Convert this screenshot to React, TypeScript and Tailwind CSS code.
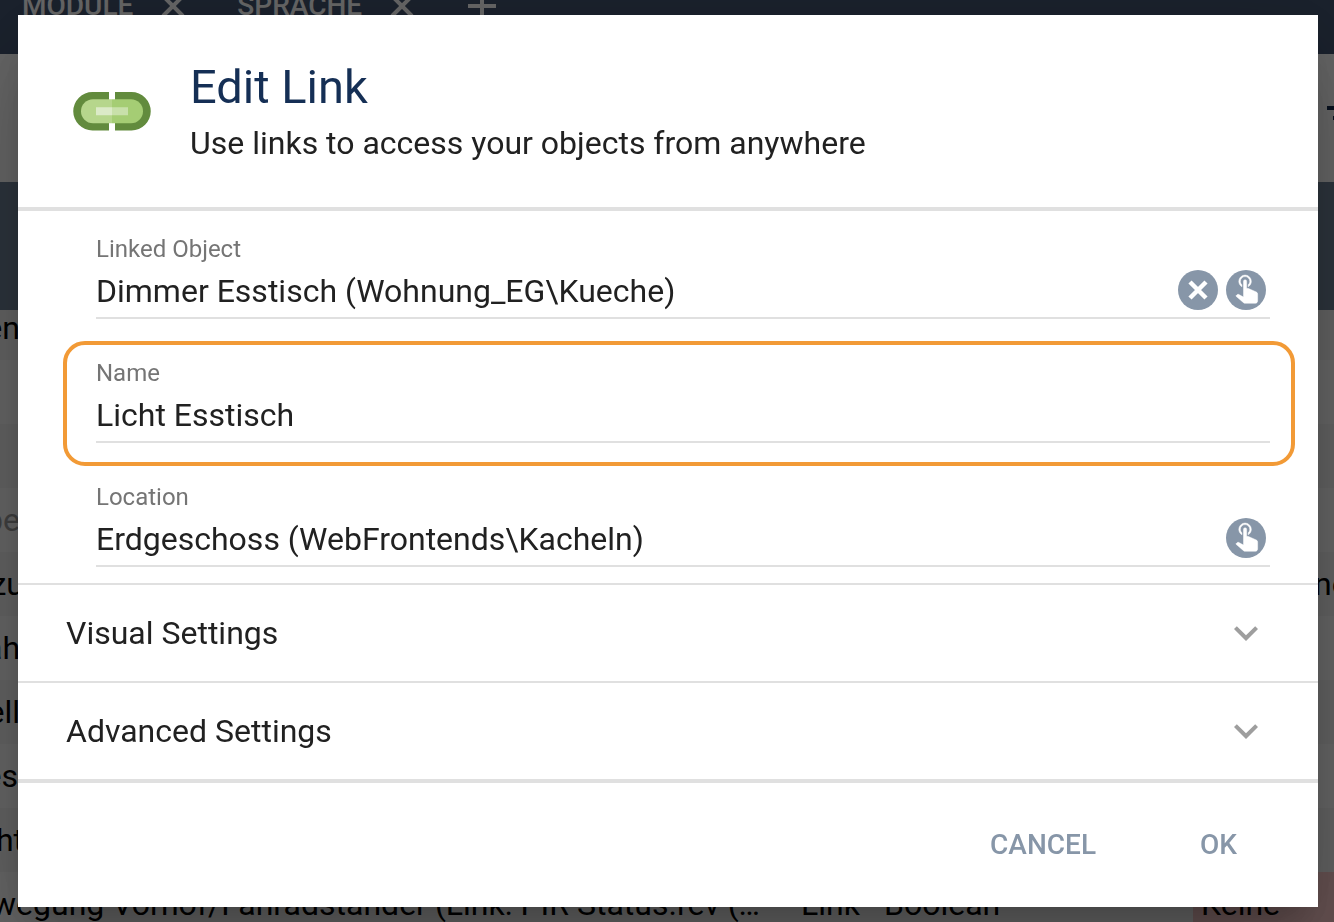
import { useState } from "react";
import { MdExpandMore, MdFilterList, MdAdd } from "react-icons/md";

const rows = [
  { name: "en", type: "", className: "w-9" },
  { name: "", type: "", className: "w-9" },
  { name: "", type: "", className: "w-9" },
  { name: "pe", type: "", className: "w-9 text-[#9e9e9e]" },
  { name: "zu", type: "ne", className: "w-10" },
  { name: "ah", type: "", className: "w-9" },
  { name: "ell", type: "", className: "w-9" },
  { name: "es", type: "", className: "w-[34px]" },
  { name: "ht", type: "", className: "w-10" },
];

function TabCloseIcon() {
  return (
    <svg viewBox="0 0 40 40" className="size-10" aria-hidden="true">
      <path d="M10 10l20 20M30 10L10 30" stroke="currentColor" strokeWidth="4" />
    </svg>
  );
}

function ObjectPage() {
  return (
    <div className="flex h-screen flex-col overflow-hidden bg-white text-[32px] leading-10 text-black">
      <nav className="flex h-[54px] shrink-0 items-start gap-11 overflow-hidden bg-[#425470] pl-[22px] text-[28px] leading-3 font-medium text-white">
        <span className="flex h-3 items-center gap-5">
          MODULE <TabCloseIcon />
        </span>
        <span className="flex h-3 items-center gap-5">
          SPRACHE <TabCloseIcon />
        </span>
        <span className="-ml-2 flex h-3 items-center">
          <MdAdd className="size-12" />
        </span>
      </nav>
      <div className="flex h-32 shrink-0 items-center justify-end overflow-hidden text-[#12294d]">
        <MdFilterList className="-mr-[35px] size-12 shrink-0" />
      </div>
      <div className="h-32 shrink-0 bg-[#6f8297]" />
      <div className="min-h-0 flex-1 overflow-hidden">
        {rows.map((row, i) => (
          <div
            key={i}
            className={`flex items-center justify-between ${i === 0 ? "h-[50px] pb-3.5" : "h-16"} ${i % 2 === 0 ? "bg-[#f5f5f5]" : "bg-white"}`}
          >
            <span className={`-ml-4 flex justify-end whitespace-nowrap ${row.className}`}>{row.name}</span>
            <span className="w-5">{row.type}</span>
          </div>
        ))}
        <div className="flex h-16 items-center whitespace-nowrap">
          <span className="-ml-2 w-[809px]">wegung Vorhof/Fahradständer (Link: PIR Status.rev (…</span>
          <span className="w-[83px]">Link</span>
          <span className="w-[309px]">Boolean</span>
          <span className="flex h-16 flex-1 items-center bg-[#ffcccc] pl-2">Keine</span>
        </div>
      </div>
    </div>
  );
}

function LinkIcon() {
  return (
    <svg viewBox="0 0 80 40" className="h-10 w-20 shrink-0" aria-hidden="true">
      <path d="M37 1H20.500a19.250 19.250 0 0 0 0 38.500H37z M43 1h16.500a19.250 19.250 0 0 1 0 38.500H43z" fill="#628b3d" />
      <path d="M40 8.250H21a12 12 0 0 0 0 24h19z" fill="#b6d68c" />
      <path d="M40 8.250h19a12 12 0 0 1 0 24H40z" fill="#a5cd74" />
      <path d="M24 16.250h16v8H24z" fill="#dbeac7" />
      <path d="M40 16.250h16v8H40z" fill="#c8e0aa" />
    </svg>
  );
}

function RoundButton({ label, kind }: { label: string; kind: "clear" | "pick" }) {
  return (
    <button type="button" aria-label={label} className="size-10 shrink-0 rounded-full bg-[#8796a8] text-white">
      <svg viewBox="0 0 40 40" className="size-10" aria-hidden="true">
        {kind === "clear" ? (
          <path d="M12 12l16 16M28 12L12 28" stroke="currentColor" strokeWidth="4.500" />
        ) : (
          <path
            transform="translate(1.8 -2.8) scale(1.57)"
            fill="currentColor"
            d="M10,9A1,1 0 0,1 11,8A1,1 0 0,1 12,9V13.47L13.21,13.6L18.15,15.79C18.68,16.03 19,16.56 19,17.14V21.5C18.97,22.32 18.32,22.97 17.5,23H11C10.62,23 10.26,22.85 10,22.57L5.1,18.37L5.84,17.6C6.03,17.39 6.3,17.28 6.58,17.28H6.8L10,19V9M11,5A4,4 0 0,1 15,9C15,10.5 14.2,11.77 13,12.46V11.24C13.61,10.69 14,9.89 14,9A3,3 0 0,0 11,6A3,3 0 0,0 8,9C8,9.89 8.39,10.69 9,11.24V12.46C7.8,11.77 7,10.5 7,9A4,4 0 0,1 11,5Z"
            stroke="currentColor"
            strokeWidth="0.3"
          />
        )}
      </svg>
    </button>
  );
}

type FieldProps = { id: string; label: string; initial: string; clearable?: boolean; pickable?: boolean; highlighted?: boolean };

function Field({ id, label, initial, clearable, pickable, highlighted }: FieldProps) {
  const [value, setValue] = useState(initial);
  return (
    <div className="relative pt-6 pr-12 pb-4 pl-[78px]">
      {highlighted && (
        <div className="pointer-events-none absolute top-1.5 right-[23px] -bottom-[7px] left-[45px] rounded-[22px] border-4 border-[#f29a36]" />
      )}
      <label htmlFor={id} className="block text-2xl leading-7 text-[#757575]">
        {label}
      </label>
      <div className="flex h-14 items-center gap-2 border-b-2 border-[#e0e0e0] pr-1">
        <input id={id} value={value} onChange={(e) => setValue(e.target.value)} className="h-11 min-w-0 flex-1 bg-transparent pt-0.5 text-[32px] outline-none" />
        {clearable && <RoundButton label={`Clear ${label}`} kind="clear" />}
        {pickable && <RoundButton label={`Select ${label}`} kind="pick" />}
      </div>
    </div>
  );
}

function Section({ title }: { title: string }) {
  return (
    <button type="button" className="flex h-[98px] w-full items-center justify-between border-t-2 border-[#e0e0e0] px-12 text-left">
      {title}
      <MdExpandMore className="size-12 text-[#9e9e9e]" />
    </button>
  );
}

export default function App() {
  return (
    <div className="font-['Roboto',sans-serif]">
      <ObjectPage />
      <div className="fixed inset-0 bg-black/60 py-[15px] pr-4 pl-[18px]">
        <div
          role="dialog"
          aria-modal="true"
          aria-labelledby="dialog-title"
          className="w-full bg-white text-[32px] leading-10 text-[#212121] shadow-[0_22px_30px_-14px_rgba(0,0,0,0.2),0_48px_76px_6px_rgba(0,0,0,0.14),0_18px_92px_16px_rgba(0,0,0,0.12)]"
        >
          <header className="flex h-[196px] items-center gap-[38px] border-b-4 border-[#e0e0e0] pl-[54px]">
            <LinkIcon />
            <div>
              <h1 id="dialog-title" className="text-[47px] leading-16 text-[#152f55]">
                Edit Link
              </h1>
              <p className="leading-12">Use links to access your objects from anywhere</p>
            </div>
          </header>
          <form id="link-form" onSubmit={(e) => e.preventDefault()}>
            <Field id="linked-object" label="Linked Object" initial="Dimmer Esstisch (Wohnung_EG\Kueche)" clearable pickable />
            <Field id="name" label="Name" initial="Licht Esstisch" highlighted />
            <Field id="location" label="Location" initial="Erdgeschoss (WebFrontends\Kacheln)" pickable />
          </form>
          <Section title="Visual Settings" />
          <Section title="Advanced Settings" />
          <footer className="flex h-32 items-center justify-end gap-10 border-t-4 border-[#e0e0e0] pr-[49px] text-[28px] font-medium text-[#8796a8]">
            <button type="button" className="h-18 px-8">
              CANCEL
            </button>
            <button type="submit" form="link-form" className="h-18 px-8">
              OK
            </button>
          </footer>
        </div>
      </div>
    </div>
  );
}
